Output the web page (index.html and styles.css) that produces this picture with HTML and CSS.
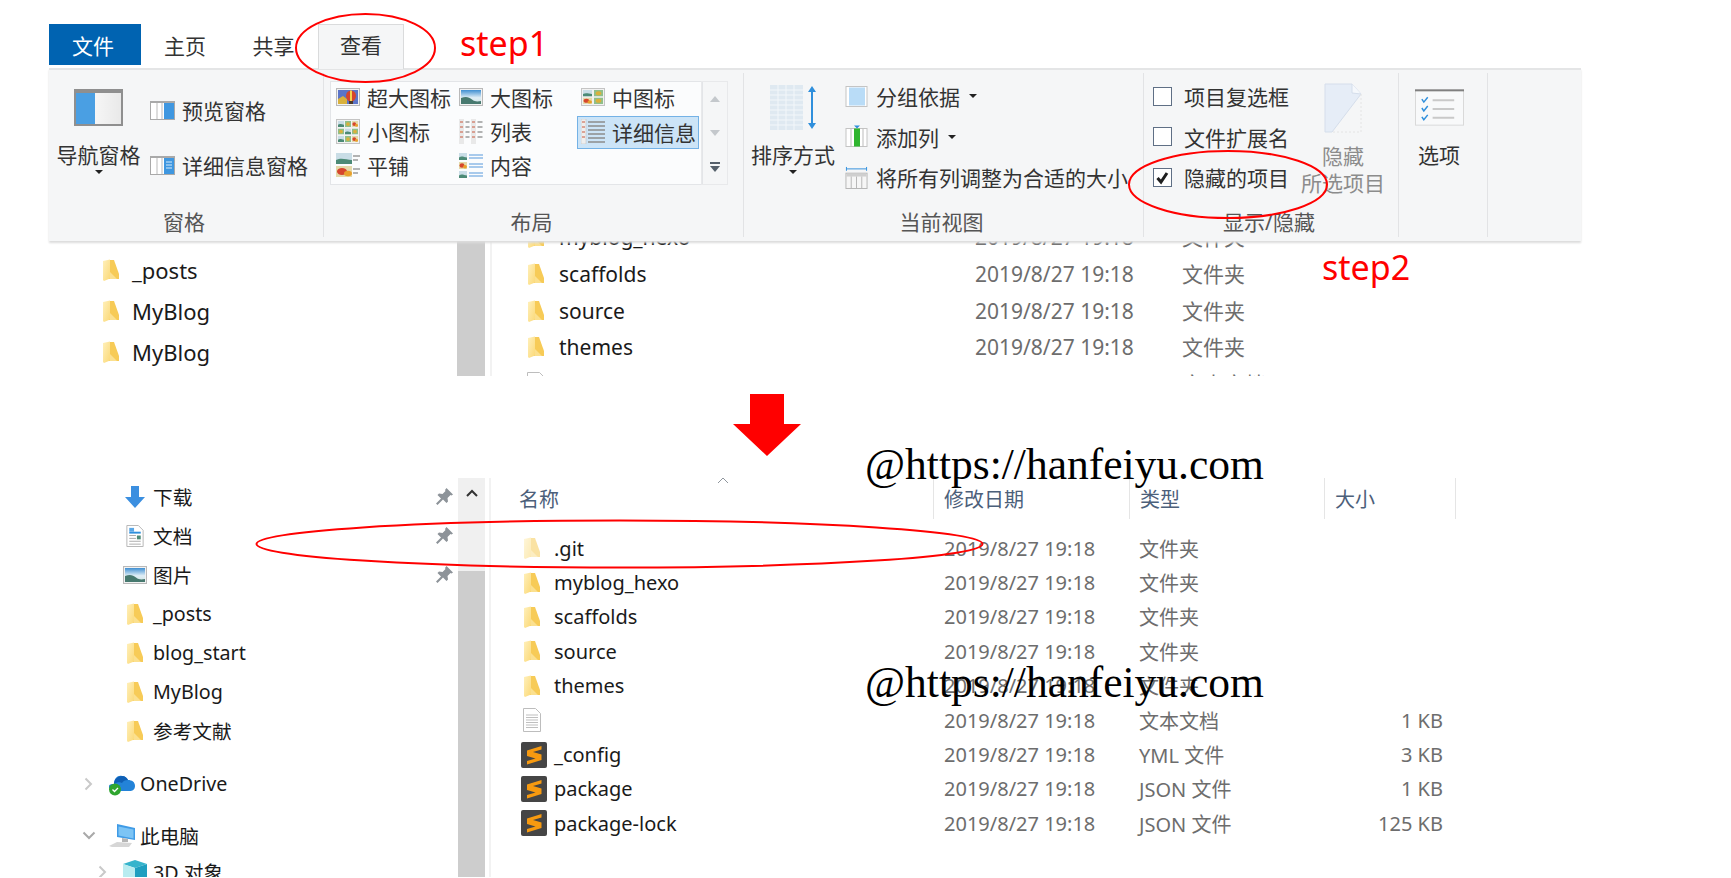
FILE: index.html
```html
<!doctype html>
<html lang="zh">
<head>
<meta charset="utf-8">
<title>显示隐藏的项目</title>
<link rel="stylesheet" href="styles.css">
</head>
<body>
<svg class="sprite" aria-hidden="true">
  <defs>
    <linearGradient id="sky" x1="0" y1="0" x2="0" y2="1"><stop offset="0" stop-color="#3f8fd2"/><stop offset=".55" stop-color="#dfeef6"/><stop offset="1" stop-color="#cfe3e3"/></linearGradient>
    <linearGradient id="leaf" x1="0" y1="0" x2="1" y2="1"><stop offset="0" stop-color="#fff0bb"/><stop offset="1" stop-color="#fbd978"/></linearGradient>
    <linearGradient id="pane" x1="0" y1="0" x2="1" y2="0"><stop offset="0" stop-color="#fff"/><stop offset="1" stop-color="#e9e9e9"/></linearGradient>
  </defs>
  <symbol id="folder" viewBox="0 0 16 22">
    <path d="M5 1h6L16 15v5H5z" fill="#f7cb57"/>
    <path d="M0 2l7-1.500V19.500L1 22l-1-1z" fill="url(#leaf)"/>
    <path d="M7 13L14 20H7z" fill="#fbe08f"/>
  </symbol>
  <symbol id="sublime" viewBox="0 0 26 26">
    <rect width="26" height="26" rx="2" fill="#454545"/>
    <path d="M20.500 4L6 8.500V14l8.500 2.500L6 19v3.500L20.500 18v-5.500L12 10l8.500-2.500z" fill="#f79a10"/>
  </symbol>
  <symbol id="txt" viewBox="0 0 18 24">
    <path d="M.5.500h12l5 5v18H.5z" fill="#fff" stroke="#bdbdbd"/>
    <path d="M3 7h12M3 9.500h12M3 12h12M3 14.500h12M3 17h12M3 19.500h12" stroke="#bfbfbf"/>
  </symbol>
  <symbol id="pin" viewBox="0 0 17 17">
    <path d="M10.500 0L17 6.500l-1.500 1-1-.5-3 3 .5 3.500-1.500 1.500-3.500-3.500L1.500 17 0 15.500l5-5L1.500 7 3 5.500 6.500 6l3-3-.5-1z" fill="#8d9399"/>
  </symbol>
  <symbol id="land" viewBox="0 0 24 18">
    <rect x=".5" y=".5" width="23" height="17" fill="#f2f2f2" stroke="#b9b9b9"/>
    <rect x="2" y="2" width="20" height="14" fill="url(#sky)"/>
    <path d="M2 10c5-2 8-1 11 1.500s6 2 9 1.500v3H2z" fill="#47796f"/>
  </symbol>
  <symbol id="tile-a" viewBox="0 0 8 8" preserveAspectRatio="none"><rect width="8" height="8" fill="#c9dde6"/><path d="M0 5c3-2 5 0 8 0v3H0z" fill="#4c8a76"/></symbol>
  <symbol id="tile-b" viewBox="0 0 8 8" preserveAspectRatio="none"><rect width="8" height="8" fill="#e4d9a9"/><circle cx="3" cy="4" r="2.500" fill="#d6452c"/><circle cx="6" cy="5.500" r="2" fill="#e9a02c"/></symbol>
  <symbol id="tile-c" viewBox="0 0 8 8" preserveAspectRatio="none"><rect width="8" height="8" fill="#8fbf8a"/><circle cx="4" cy="4" r="2.500" fill="#d9b13c"/></symbol>
</svg>

<div class="page">

  <section class="shot-top">
    <div class="tabs">
      <div class="tab tab-file">文件</div>
      <div class="tab tab-home">主页</div>
      <div class="tab tab-share">共享</div>
      <div class="tab tab-view">查看</div>
    </div>

    <div class="ribbon">
      <div class="group group-panes">
        <div class="group-body">
          <div class="big-btn">
            <svg class="ic-nav" viewBox="0 0 49 37"><rect width="49" height="37" fill="#8f8f8f"/><rect x="2" y="4" width="45" height="31" fill="url(#pane)"/><rect x="2" y="4" width="19" height="31" fill="#4a9fe3"/></svg>
            <span class="big-label">导航窗格</span>
            <i class="caret"></i>
          </div>
          <div class="pane-list">
            <div class="pane-btn">
              <svg class="ic-pane" viewBox="0 0 25 19"><rect width="25" height="19" fill="#a9a9a9"/><rect x="1" y="2" width="23" height="16" fill="#fff"/><path d="M7 2v16M12 2v16" stroke="#bbb"/><rect x="14" y="2" width="10" height="16" fill="#3f97e0"/></svg>
              <span>预览窗格</span>
            </div>
            <div class="pane-btn">
              <svg class="ic-pane" viewBox="0 0 25 19"><rect width="25" height="19" fill="#a9a9a9"/><rect x="1" y="2" width="23" height="16" fill="#fff"/><path d="M7 2v16M12 2v16" stroke="#bbb"/><rect x="14" y="2" width="10" height="16" fill="#3f97e0"/><path d="M16 6h6M16 9h6M16 12h6" stroke="#d7ebfb"/></svg>
              <span>详细信息窗格</span>
            </div>
          </div>
        </div>
        <div class="group-label">窗格</div>
      </div>

      <div class="group group-layout">
        <div class="group-body">
          <div class="gallery">
            <div class="gal-item">
              <svg class="ic-flat" viewBox="0 0 24 18" preserveAspectRatio="none"><rect x=".5" y=".5" width="23" height="17" fill="#f2f2f2" stroke="#b9b9b9"/><rect x="2" y="2" width="20" height="14" fill="#5b74c8"/><path d="M2 11l5-3 4 3v5H2z" fill="#d9b13c"/><ellipse cx="15" cy="8" rx="5" ry="5.500" fill="#d6452c"/><path d="M15 2.500v11" stroke="#f3d250" stroke-width="2"/><rect x="13" y="13" width="4" height="3" fill="#4c3a2a"/></svg>
              <span>超大图标</span>
            </div>
            <div class="gal-item">
              <svg class="ic-flat" viewBox="0 0 24 18"><use href="#land"/></svg>
              <span>大图标</span>
            </div>
            <div class="gal-item">
              <svg class="ic-flat" viewBox="0 0 24 18" preserveAspectRatio="none"><rect x=".5" y=".5" width="23" height="17" fill="#f2f2f2" stroke="#c4c4c4"/><use href="#tile-a" x="2" y="2" width="9" height="6.500"/><use href="#tile-c" x="13" y="2" width="9" height="6.500"/><use href="#tile-b" x="2" y="9.500" width="9" height="6.500"/><use href="#tile-c" x="13" y="9.500" width="9" height="6.500"/></svg>
              <span>中图标</span>
            </div>
            <div class="gal-item">
              <svg class="ic-tall" viewBox="0 0 24 25" preserveAspectRatio="none"><rect x=".5" y=".5" width="23" height="24" fill="#f2f2f2" stroke="#c4c4c4"/><use href="#tile-a" x="2" y="2" width="6" height="6"/><use href="#tile-c" x="9" y="2" width="6" height="6"/><use href="#tile-b" x="16" y="2" width="6" height="6"/><use href="#tile-c" x="2" y="9.500" width="6" height="6"/><use href="#tile-a" x="9" y="9.500" width="6" height="6"/><use href="#tile-c" x="16" y="9.500" width="6" height="6"/><use href="#tile-a" x="2" y="17" width="6" height="6"/><use href="#tile-c" x="9" y="17" width="6" height="6"/><use href="#tile-b" x="16" y="17" width="6" height="6"/></svg>
              <span>小图标</span>
            </div>
            <div class="gal-item">
              <svg class="ic-tall" viewBox="0 0 24 25" preserveAspectRatio="none"><path d="M0 0h5v25H0zM12 0h5v25h-5z" fill="#e9e9e9"/><path d="M1 3h3M1 8h3M1 13h3M1 18h3M13 3h3M13 8h3M13 13h3M13 18h3" stroke="#c9593f"/><path d="M6.500 3h4M6.500 8h4M6.500 13h4M6.500 18h4M18.500 3h5M18.500 8h5M18.500 13h5M18.500 18h5" stroke="#9a9a9a" stroke-width="1.300"/></svg>
              <span>列表</span>
            </div>
            <div class="gal-item gal-selected">
              <svg class="ic-tall" viewBox="0 0 24 25" preserveAspectRatio="none"><path d="M0 0h5v25H0z" fill="#eee" stroke="#bbb" stroke-width=".5"/><path d="M1 3h3M1 8h3M1 13h3M1 18h3" stroke="#c9593f"/><path d="M7 3h17M7 7h17M7 11h17M7 15h17M7 19h17M7 23h17" stroke="#8c8c8c" stroke-width="1.300"/></svg>
              <span>详细信息</span>
            </div>
            <div class="gal-item">
              <svg class="ic-tall" viewBox="0 0 24 25" preserveAspectRatio="none"><use href="#tile-a" x="0" y="0" width="16" height="11"/><use href="#tile-b" x="0" y="13" width="16" height="11"/><path d="M17 3h7M17 7h5M17 16h7M17 20h5" stroke="#9a9a9a" stroke-width="1.500"/></svg>
              <span>平铺</span>
            </div>
            <div class="gal-item">
              <svg class="ic-tall" viewBox="0 0 24 25" preserveAspectRatio="none"><use href="#tile-a" x="0" y="0" width="8" height="7"/><use href="#tile-b" x="0" y="9" width="8" height="7"/><use href="#tile-a" x="0" y="18" width="8" height="7"/><path d="M10 2h14M10 5h14M10 11h14M10 14h14M10 20h14M10 23h14" stroke="#8db9e6" stroke-width="1.300"/></svg>
              <span>内容</span>
            </div>
          </div>
          <div class="gal-scroll">
            <div class="gal-cell"><i class="tri-up"></i></div>
            <div class="gal-cell"><i class="tri-down"></i></div>
            <div class="gal-cell gal-more"><i class="bar"></i><i class="tri-dark"></i></div>
          </div>
        </div>
        <div class="group-label">布局</div>
      </div>

      <div class="group group-view">
        <div class="group-body">
          <div class="big-btn big-sort">
            <svg class="ic-sort" viewBox="0 0 47 45"><rect width="33" height="45" fill="#dfe9f1"/><path d="M0 5h33M0 10h33M0 15h33M0 20h33M0 25h33M0 30h33M0 35h33M0 40h33M8 0v45M16 0v45M24 0v45" stroke="#f3f7fa"/><path d="M42 3v39" stroke="#2f8fdc" stroke-width="2"/><path d="M38 7l4-6 4 6zM38 38l4 6 4-6z" fill="#2f8fdc"/></svg>
            <span class="big-label">排序方式</span>
            <i class="caret"></i>
          </div>
          <div class="view-list">
            <div class="view-btn">
              <svg class="ic-view" viewBox="0 0 23 22"><rect x="1" y="1" width="21" height="20" fill="#fff" stroke="#c4c4c4"/><rect x="4" y="2" width="16" height="18" fill="#b9dcf7"/></svg>
              <span>分组依据</span><i class="caret caret-side"></i>
            </div>
            <div class="view-btn">
              <svg class="ic-view" viewBox="0 0 23 22"><rect x="1" y="3" width="21" height="18" fill="#fff" stroke="#c4c4c4"/><rect x="9" y="3" width="6" height="18" fill="#2fb52f"/><path d="M6 3v18M18 3v18" stroke="#bbb"/><path d="M9 0h6l-3 3z" fill="#2f8fdc"/></svg>
              <span>添加列</span><i class="caret caret-side"></i>
            </div>
            <div class="view-btn">
              <svg class="ic-view" viewBox="0 0 23 24"><path d="M1 3h21" stroke="#2f8fdc"/><path d="M1 1v4M22 1v4" stroke="#2f8fdc"/><rect x=".5" y="7.500" width="22" height="16" fill="#f6f6f6" stroke="#b5b5b5"/><rect x="1" y="8" width="21" height="3" fill="#cfcfcf"/><path d="M6 11v12M11.500 11v12M17 11v12" stroke="#b5b5b5"/></svg>
              <span>将所有列调整为合适的大小</span>
            </div>
          </div>
        </div>
        <div class="group-label">当前视图</div>
      </div>

      <div class="group group-show">
        <div class="group-body">
          <div class="check-list">
            <div class="check-row"><span class="check"></span><span>项目复选框</span></div>
            <div class="check-row"><span class="check"></span><span>文件扩展名</span></div>
            <div class="check-row">
              <span class="check"><svg viewBox="0 0 17 17"><path d="M3.500 9l3.500 4 6-9" fill="none" stroke="#1f1f1f" stroke-width="3"/></svg></span>
              <span>隐藏的项目</span>
            </div>
          </div>
          <div class="hide-btn">
            <svg class="ic-hide" viewBox="0 0 38 50"><path d="M1 1h27l9 10L8 49H1z" fill="#e6edf7" stroke="#d5deeb"/><path d="M28 1v9l9 1" fill="#f5f8fc" stroke="#d5deeb"/><path d="M37 11v38H8" fill="none" stroke="#e4e4e4" stroke-dasharray="2 2"/></svg>
            <span class="hide-top">隐藏</span>
            <span>所选项目</span>
          </div>
        </div>
        <div class="group-label">显示/隐藏</div>
      </div>

      <div class="group group-options">
        <div class="group-body">
          <div class="big-btn big-options">
            <svg class="ic-nav" viewBox="0 0 50 37"><rect x=".5" y=".5" width="49" height="36" fill="#f8f9fa" stroke="#d9d9d9"/><rect width="50" height="2" fill="#808080"/><path d="M7 10l2 3 4-5M7 19l2 3 4-5M7 28l2 3 4-5" fill="none" stroke="#2f8fdc" stroke-width="1.500"/><path d="M18 11h22M18 20h22M18 29h22" stroke="#c9c9c9" stroke-width="2"/></svg>
            <span class="big-label">选项</span>
          </div>
        </div>
      </div>
    </div>

    <div class="frag">
      <div class="frag-nav">
        <div class="frag-nav-row"><svg class="ic-folder"><use href="#folder"/></svg><span>_posts</span></div>
        <div class="frag-nav-row"><svg class="ic-folder"><use href="#folder"/></svg><span>MyBlog</span></div>
        <div class="frag-nav-row"><svg class="ic-folder"><use href="#folder"/></svg><span>MyBlog</span></div>
      </div>
      <div class="frag-scroll"></div>
      <div class="frag-list">
        <div class="frag-row"><div class="frag-name"><span class="slot"><svg class="ic-folder"><use href="#folder"/></svg></span><span>myblog_hexo</span></div><div class="cell-date">2019/8/27 19:18</div><div class="cell-type">文件夹</div></div>
        <div class="frag-row"><div class="frag-name"><span class="slot"><svg class="ic-folder"><use href="#folder"/></svg></span><span>scaffolds</span></div><div class="cell-date">2019/8/27 19:18</div><div class="cell-type">文件夹</div></div>
        <div class="frag-row"><div class="frag-name"><span class="slot"><svg class="ic-folder"><use href="#folder"/></svg></span><span>source</span></div><div class="cell-date">2019/8/27 19:18</div><div class="cell-type">文件夹</div></div>
        <div class="frag-row"><div class="frag-name"><span class="slot"><svg class="ic-folder"><use href="#folder"/></svg></span><span>themes</span></div><div class="cell-date">2019/8/27 19:18</div><div class="cell-type">文件夹</div></div>
        <div class="frag-row"><div class="frag-name"><span class="slot"><svg class="ic-txt"><use href="#txt"/></svg></span></div><div class="cell-date"></div><div class="cell-type">文本文档</div></div>
      </div>
    </div>
  </section>

  <div class="arrow-box">
    <svg class="arrow" viewBox="0 0 68 62"><path d="M17 0h34v30h17L34 62 0 30h17z" fill="#f00"/></svg>
  </div>

  <section class="shot-bottom">
    <div class="nav">
      <div class="nav-row">
        <span class="nav-slot"><svg class="ic-small" viewBox="0 0 20 22"><path d="M6 0h8v11h6l-10 11L0 11h6z" fill="#3b8fe0"/></svg></span>
        <span>下载</span><svg class="ic-pin"><use href="#pin"/></svg>
      </div>
      <div class="nav-row">
        <span class="nav-slot"><svg class="ic-small" viewBox="0 0 18 23"><path d="M.5.500h12l5 5v17H.5z" fill="#fff" stroke="#b5b5b5"/><path d="M3 8h12" stroke="#2f8fdc" stroke-width="2"/><rect x="3" y="3" width="5" height="4" fill="#5aa7e6"/><path d="M3 11h7M3 14h7M3 17h12M3 20h12" stroke="#a9a9a9"/><rect x="11" y="11" width="4" height="4" fill="#4c8a76"/></svg></span>
        <span>文档</span><svg class="ic-pin"><use href="#pin"/></svg>
      </div>
      <div class="nav-row">
        <span class="nav-slot"><svg class="ic-pic"><use href="#land"/></svg></span>
        <span>图片</span><svg class="ic-pin"><use href="#pin"/></svg>
      </div>
      <div class="nav-row"><span class="nav-slot"><svg class="ic-folder"><use href="#folder"/></svg></span><span>_posts</span></div>
      <div class="nav-row"><span class="nav-slot"><svg class="ic-folder"><use href="#folder"/></svg></span><span>blog_start</span></div>
      <div class="nav-row"><span class="nav-slot"><svg class="ic-folder"><use href="#folder"/></svg></span><span>MyBlog</span></div>
      <div class="nav-row"><span class="nav-slot"><svg class="ic-folder"><use href="#folder"/></svg></span><span>参考文献</span></div>

      <div class="nav-row nav-top">
        <span class="chev-slot"><svg class="ic-chev" viewBox="0 0 9 14"><path d="M1.500 1.500L7 7l-5.500 5.500" fill="none" stroke="#c9c9c9" stroke-width="2"/></svg></span>
        <svg class="ic-drive" viewBox="0 0 26 24"><path d="M5 12c0-6 4-9 8-8 3 0 5 2 6 4 4 0 7 2 7 6s-3 5-5 5H6c-3 0-6-1-6-4s2-3 5-3z" fill="#2383d8"/><path d="M13 4c3 0 5 2 6 4-3 0-5 1-6 3-2-1-5-1-8 1 0-5 4-8 8-8z" fill="#0f5fb5"/><circle cx="6" cy="17.500" r="6" fill="#2fa52f"/><path d="M3.500 17.500l2 2 3.500-3.500" fill="none" stroke="#fff" stroke-width="1.300"/></svg>
        <span>OneDrive</span>
      </div>
      <div class="nav-row nav-top">
        <span class="chev-slot"><svg class="ic-chev-down" viewBox="0 0 14 9"><path d="M1.500 1.500L7 7l5.500-5.500" fill="none" stroke="#a9a9a9" stroke-width="2"/></svg></span>
        <svg class="ic-drive" viewBox="0 0 26 24"><path d="M8 0l18 4v12L8 13z" fill="#3f9be6"/><path d="M9.500 2.500L24.500 5.500V14.500L9.500 11.500z" fill="#7cc4f5"/><path d="M13 14l6 1v3h-6z" fill="#b5b5b5"/><path d="M0 22l8-4 15 1-3 4H3z" fill="#d6d6d6"/></svg>
        <span>此电脑</span>
      </div>
      <div class="nav-row nav-sub">
        <span class="chev-slot"><svg class="ic-chev" viewBox="0 0 9 14"><path d="M1.500 1.500L7 7l-5.500 5.500" fill="none" stroke="#c9c9c9" stroke-width="2"/></svg></span>
        <svg class="ic-cube" viewBox="0 0 24 24"><path d="M12 0l12 4-12 4L0 4z" fill="#36b4cc"/><path d="M0 4l12 4v16L0 20z" fill="#b9ecf0"/><path d="M24 4L12 8v16l12-4z" fill="#1f9fc0"/></svg>
        <span>3D 对象</span>
      </div>
    </div>

    <div class="nav-scroll">
      <div class="nav-scroll-top"><svg class="ic-up" viewBox="0 0 12 8"><path d="M1 7l5-5 5 5" fill="none" stroke="#333" stroke-width="2"/></svg></div>
    </div>

    <div class="files">
      <div class="files-head">
        <div class="head-cell head-name">名称<svg class="ic-sort-up" viewBox="0 0 12 7"><path d="M1 6l5-5 5 5" fill="none" stroke="#8f969d"/></svg></div>
        <div class="head-cell">修改日期</div>
        <div class="head-cell">类型</div>
        <div class="head-cell">大小</div>
      </div>
      <div class="files-body">
        <div class="file-row row-hidden"><div class="file-name"><span class="slot"><svg class="ic-folder"><use href="#folder"/></svg></span><span>.git</span></div><div class="cell-date">2019/8/27 19:18</div><div class="cell-type">文件夹</div><div class="cell-size"></div></div>
        <div class="file-row"><div class="file-name"><span class="slot"><svg class="ic-folder"><use href="#folder"/></svg></span><span>myblog_hexo</span></div><div class="cell-date">2019/8/27 19:18</div><div class="cell-type">文件夹</div><div class="cell-size"></div></div>
        <div class="file-row"><div class="file-name"><span class="slot"><svg class="ic-folder"><use href="#folder"/></svg></span><span>scaffolds</span></div><div class="cell-date">2019/8/27 19:18</div><div class="cell-type">文件夹</div><div class="cell-size"></div></div>
        <div class="file-row"><div class="file-name"><span class="slot"><svg class="ic-folder"><use href="#folder"/></svg></span><span>source</span></div><div class="cell-date">2019/8/27 19:18</div><div class="cell-type">文件夹</div><div class="cell-size"></div></div>
        <div class="file-row"><div class="file-name"><span class="slot"><svg class="ic-folder"><use href="#folder"/></svg></span><span>themes</span></div><div class="cell-date">2019/8/27 19:18</div><div class="cell-type">文件夹</div><div class="cell-size"></div></div>
        <div class="file-row"><div class="file-name"><span class="slot"><svg class="ic-txt"><use href="#txt"/></svg></span></div><div class="cell-date">2019/8/27 19:18</div><div class="cell-type">文本文档</div><div class="cell-size">1 KB</div></div>
        <div class="file-row"><div class="file-name"><span class="slot"><svg class="ic-sublime"><use href="#sublime"/></svg></span><span>_config</span></div><div class="cell-date">2019/8/27 19:18</div><div class="cell-type">YML 文件</div><div class="cell-size">3 KB</div></div>
        <div class="file-row"><div class="file-name"><span class="slot"><svg class="ic-sublime"><use href="#sublime"/></svg></span><span>package</span></div><div class="cell-date">2019/8/27 19:18</div><div class="cell-type">JSON 文件</div><div class="cell-size">1 KB</div></div>
        <div class="file-row"><div class="file-name"><span class="slot"><svg class="ic-sublime"><use href="#sublime"/></svg></span><span>package-lock</span></div><div class="cell-date">2019/8/27 19:18</div><div class="cell-type">JSON 文件</div><div class="cell-size">125 KB</div></div>
      </div>
    </div>
  </section>

  <!-- annotations drawn on top of the screenshots -->
  <svg class="marks" viewBox="0 0 1731 878">
    <ellipse cx="365.500" cy="48" rx="69.500" ry="34"/>
    <ellipse cx="1228" cy="184.500" rx="99" ry="33.500"/>
    <ellipse cx="619.500" cy="544" rx="363" ry="23.500"/>
  </svg>
  <span class="step step1">step1</span>
  <span class="step step2">step2</span>
  <span class="mark-url url1">@https://hanfeiyu.com</span>
  <span class="mark-url url2">@https://hanfeiyu.com</span>
</div>
</body>
</html>
```

FILE: styles.css
```css
* { margin: 0; padding: 0; box-sizing: border-box; }

body {
    background: #fff;
    font-family: "Noto Sans", "Noto Sans CJK SC", sans-serif;
    font-size: 21px;
    color: #333;
}

i { display: block; }
svg { display: block; flex-shrink: 0; }

.sprite { position: absolute; width: 0; height: 0; }

.page {
    position: relative;
    width: 1731px;
    height: 878px;
    padding-top: 24px;
    overflow: hidden;
    background: #fff;
}

/* top screenshot */
.shot-top {
    width: 1532px;
    margin-left: 49px;
}

.tabs {
    display: flex;
    height: 44px;
    position: relative;
    z-index: 2;
}

.tab {
    display: flex;
    align-items: center;
    justify-content: center;
    height: 41px;
}

.tab-file { width: 92px; padding-right: 4px; background: #0063b1; color: #fff; }
.tab-home { width: 88px; }
.tab-share { width: 89px; }
.tab-view {
    width: 86px;
    height: 45px;
    padding-bottom: 7px;
    background: #f5f6f7;
    border: 1px solid #dadbdc;
    border-bottom: none;
}

.ribbon {
    position: relative;
    z-index: 1;
    display: flex;
    height: 173px;
    padding: 3px 0 4px;
    background: #f5f6f7;
    border-top: 2px solid #e4e5e6;
    box-shadow: 0 2px 2px #dcdcdc;
}

.group {
    display: flex;
    flex-direction: column;
    border-right: 1px solid #e2e3e5;
}

.group-panes { width: 275px; }
.group-layout { width: 420px; }
.group-view { width: 400px; }
.group-show { width: 255px; }
.group-options { width: 89px; }

.group-body { display: flex; flex: 1; }

.group-label {
    height: 28px;
    padding-right: 4px;
    line-height: 26px;
    text-align: center;
    color: #555;
    white-space: nowrap;
}

.big-btn {
    display: flex;
    flex-direction: column;
    align-items: center;
    width: 99px;
    padding-top: 16px;
}

.big-label { height: 30px; line-height: 30px; margin-top: 14px; white-space: nowrap; }

.ic-nav { width: 49px; height: 37px; }

.caret {
    width: 0;
    height: 0;
    border-left: 4px solid transparent;
    border-right: 4px solid transparent;
    border-top: 4px solid #222;
}

.caret-side { margin-left: 9px; }

.pane-list {
    display: flex;
    flex-direction: column;
    gap: 25px;
    margin-left: 2px;
    padding-top: 22px;
}

.pane-btn { display: flex; align-items: center; height: 30px; gap: 7px; white-space: nowrap; }
.ic-pane { width: 25px; height: 19px; }

/* view gallery */
.gallery {
    display: grid;
    grid-template-columns: 123px 122px 122px;
    grid-auto-rows: 34px;
    width: 371px;
    height: 102px;
    margin: 9px 0 0 7px;
    padding-left: 1px;
    background: #fbfcfd;
    box-shadow: 0 0 0 1px #e3e5e8;
}

.gal-item {
    display: flex;
    align-items: center;
    gap: 7px;
    height: 33px;
    padding: 0 0 3px 4px;
    white-space: nowrap;
}

.gal-selected {
    background: #cce4f7;
    border: 1px solid #74b2e6;
    padding: 0 0 2px 3px;
}

.ic-flat { width: 24px; height: 18px; }
.ic-tall { width: 24px; height: 25px; }

.gal-scroll {
    width: 25px;
    height: 102px;
    margin-top: 9px;
    box-shadow: 0 0 0 1px #e8e9eb;
}

.gal-cell {
    display: flex;
    flex-direction: column;
    align-items: center;
    justify-content: center;
    height: 34px;
}

.gal-more { gap: 2px; }

.tri-up, .tri-down, .tri-dark {
    width: 0;
    height: 0;
    border-left: 5px solid transparent;
    border-right: 5px solid transparent;
}

.tri-up { border-bottom: 6px solid #c4c8cc; }
.tri-down { border-top: 6px solid #c4c8cc; }
.tri-dark { border-top: 6px solid #55606b; }
.bar { width: 10px; height: 2px; background: #55606b; }

/* current view */
.big-sort { width: 98px; padding-top: 12px; }
.big-sort .big-label { margin-top: 10px; }
.ic-sort { width: 47px; height: 45px; }

.view-list {
    display: flex;
    flex-direction: column;
    gap: 10.500px;
    margin-left: 3px;
    padding-top: 8px;
}

.view-btn { display: flex; align-items: center; height: 30px; white-space: nowrap; }
.ic-view { width: 23px; height: 23px; margin-right: 8px; }

/* show / hide */
.check-list {
    display: flex;
    flex-direction: column;
    gap: 10.500px;
    width: 157px;
    padding: 8px 0 0 9px;
}

.check-row { display: flex; align-items: center; gap: 12px; height: 30px; white-space: nowrap; }

.check {
    width: 19px;
    height: 19px;
    background: #fff;
    border: 1px solid #5f6f85;
}

.hide-btn {
    display: flex;
    flex-direction: column;
    align-items: center;
    padding-top: 10px;
    color: #8c8c8c;
    line-height: 27px;
    white-space: nowrap;
}

.ic-hide { width: 38px; height: 50px; }
.hide-top { margin-top: 10px; }

.big-options { width: 82px; margin-left: -1px; }

/* file list fragment under the ribbon */
.frag {
    display: flex;
    height: 135px;
    overflow: hidden;
}

.frag-nav {
    width: 408px;
    padding: 8px 0 0 54px;
    font-size: 22px;
}

.frag-nav-row {
    display: flex;
    align-items: center;
    gap: 13px;
    height: 41px;
    color: #1a1a1a;
}

.ic-folder { width: 16px; height: 22px; }

.frag-scroll { width: 28px; background: #cdcdcd; }

.frag-list {
    flex: 1;
    margin: -22px 0 0 5px;
    border-left: 2px solid #f2f2f2;
}

.frag-row {
    display: grid;
    grid-template-columns: 483px 207px 1fr;
    align-items: center;
    height: 36.700px;
}

.frag-name { display: flex; align-items: center; gap: 8px; padding-left: 29px; color: #1a1a1a; }

.frag-row .cell-date,
.frag-row .cell-type { padding-left: 0; color: #6d6d6d; white-space: nowrap; }

.frag-row .cell-type { margin-top: -2px; }

.slot { display: flex; justify-content: center; width: 30px; }
.ic-txt { width: 18px; height: 24px; }
.ic-sublime { width: 26px; height: 26px; margin-left: 4px; }

/* arrow */
.arrow-box {
    height: 102px;
    padding: 18px 0 0 733px;
}

.arrow { width: 68px; height: 62px; }

/* bottom screenshot */
.shot-bottom {
    display: flex;
    height: 399px;
    font-size: 20px;
    overflow: hidden;
}

.nav {
    width: 458px;
    margin-top: -1px;
    padding-right: 5px;
    font-size: 19.700px;
    color: #1a1a1a;
}

.nav-row {
    display: flex;
    align-items: center;
    height: 39px;
    padding-left: 121px;
    white-space: nowrap;
}

.nav-slot { display: flex; justify-content: center; width: 28px; margin-right: 4px; }

.nav-top { margin-top: 14px; padding-left: 84px; }
.nav-top + .nav-top { margin-top: 13px; }
.nav-sub { margin-top: -3px; padding-left: 98px; }

.chev-slot { width: 25px; }
.ic-chev { width: 9px; height: 14px; }
.ic-chev-down { width: 14px; height: 9px; margin-left: -2px; }
.ic-drive { width: 26px; height: 24px; margin-right: 5px; }
.ic-cube { width: 24px; height: 24px; margin-right: 6px; }

.ic-small { width: 20px; height: 22px; }
.ic-pic { width: 24px; height: 18px; }
.ic-pin { width: 17px; height: 17px; margin-left: auto; }

.nav-scroll { width: 27px; background: #cdcdcd; }

.nav-scroll-top {
    display: flex;
    justify-content: center;
    height: 93px;
    padding-top: 11px;
    background: #f0f0f0;
}

.ic-up { width: 12px; height: 8px; }

.files {
    flex: 1;
    margin-left: 4px;
    border-left: 2px solid #f2f2f2;
}

.files-head,
.file-row {
    display: grid;
    grid-template-columns: 443px 196px 195px 131px;
}

.files-head { height: 41px; color: #4c607a; }

.head-cell {
    display: flex;
    align-items: center;
    padding-left: 10px;
    border-right: 1px solid #e5e5e5;
    white-space: nowrap;
}

.head-name {
    position: relative;
    padding-left: 28px;
}

.ic-sort-up {
    position: absolute;
    left: 226px;
    top: -1px;
    width: 12px;
    height: 7px;
}

.files-body { margin-top: 12px; }

.file-row {
    align-items: center;
    height: 34.400px;
    color: #6d6d6d;
    white-space: nowrap;
}

.file-name { display: flex; align-items: center; gap: 7px; padding-left: 26px; color: #1a1a1a; }

.row-hidden .ic-folder { opacity: .55; }

.cell-date { padding-left: 10px; }
.cell-type { padding-left: 9px; }
.cell-size { padding-right: 13px; text-align: right; }

/* annotations */
.marks {
    position: absolute;
    left: 0;
    top: 0;
    width: 1731px;
    height: 878px;
    z-index: 3;
    fill: none;
    stroke: #f00;
    stroke-width: 2;
}

.step {
    position: absolute;
    z-index: 3;
    font-size: 34px;
    line-height: 44px;
    color: #f00;
}

.step1 { left: 460px; top: 21px; }
.step2 { left: 1322px; top: 245px; }

.mark-url {
    position: absolute;
    z-index: 3;
    left: 865px;
    font-family: "Liberation Serif", serif;
    font-size: 43.500px;
    line-height: 50px;
    color: #000;
    white-space: nowrap;
}

.url1 { top: 439px; }
.url2 { top: 657px; }
```
